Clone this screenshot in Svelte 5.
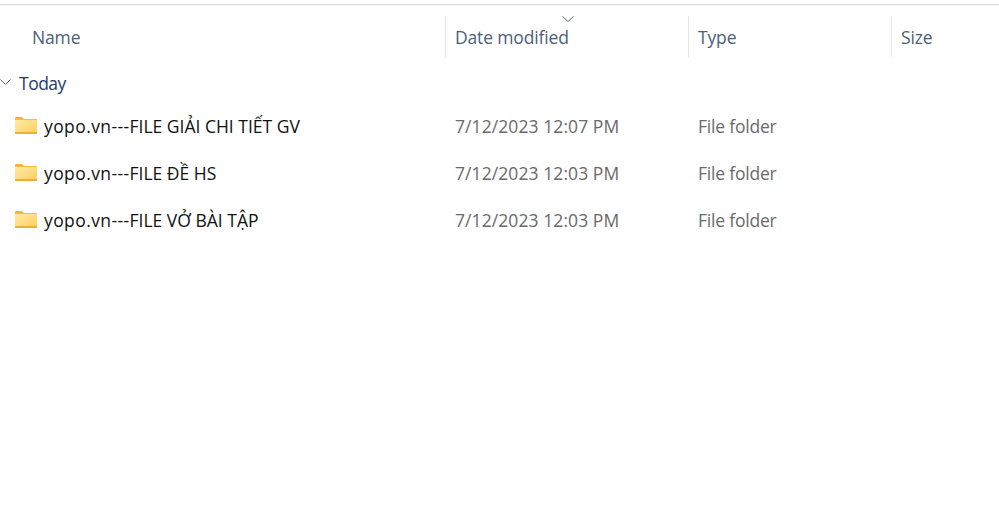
<script>
  const rows = [
    { name: 'FILE GIẢI CHI TIẾT GV', date: '7/12/2023 12:07 PM' },
    { name: 'FILE ĐỀ HS', date: '7/12/2023 12:03 PM' },
    { name: 'FILE VỞ BÀI TẬP', date: '7/12/2023 12:03 PM' }
  ];
</script>

<main class="explorer">
  <header class="head">
    <div class="col first">Name</div>
    <div class="col sep sorted">
      <svg class="sort" width="12" height="6" viewBox="0 0 12 6"><path d="M.5.5 6 5.5 11.5.5" fill="none" stroke="#5c6470" stroke-width="1"/></svg>
      Date modified
    </div>
    <div class="col sep">Type</div>
    <div class="col sep">Size</div>
  </header>

  <div class="group">
    <svg width="11" height="7" viewBox="0 0 11 7"><path d="M.5.5 5.5 5.5 10.5.5" fill="none" stroke="#6b6b6b" stroke-width="1"/></svg>
    <span>Today</span>
  </div>

  {#each rows as r}
    <div class="row">
      <div class="name">
        <svg width="22" height="18" viewBox="0 0 22 18">
          <defs>
            <linearGradient id="fold" x1="0" y1="0" x2="1" y2="1">
              <stop offset="0" stop-color="#ffeaa6"/>
              <stop offset="1" stop-color="#fdcf5f"/>
            </linearGradient>
          </defs>
          <path d="M0 2.5C0 1.7.5 1 1.3 1h5.4L9 3h13v2H0z" fill="#f4b32a"/>
          <rect x="0" y="4" width="22" height="13" fill="url(#fold)"/>
          <rect x="0" y="16" width="22" height="2" fill="#eeb02f"/>
          <rect x="0" y="3" width="22" height="1" fill="#f6bd3f"/>
        </svg>
        <span><span class="prefix">yopo.vn---</span>{r.name}</span>
      </div>
      <div class="meta date">{r.date}</div>
      <div class="meta type">File folder</div>
    </div>
  {/each}
</main>

<style>
  :global(body) {
    margin: 0;
    background: #fff;
  }
  .explorer {
    height: 511px;
    overflow: hidden;
    padding-top: 4px;
    box-sizing: border-box;
    font-family: "Open Sans", "Noto Sans", sans-serif;
    font-size: 17.5px;
  }
  .head {
    display: grid;
    grid-template-columns: 445px 243px 203px 108px;
    height: 42px;
    padding-top: 11px;
    border-top: 1px solid #e3e3e3;
    box-shadow: inset 0 1px 0 #f3f3f3;
    color: #4c607a;
    letter-spacing: -0.15px;
  }
  .col {
    display: flex;
    align-items: center;
    height: 41px;
    box-sizing: border-box;
    position: relative;
  }
  .first {
    padding-left: 32px;
  }
  .sep {
    border-left: 1px solid #e5e5e5;
    padding-left: 9px;
  }
  .sort {
    position: absolute;
    left: 116px;
    top: 0;
  }
  .group {
    display: flex;
    align-items: center;
    gap: 8px;
    height: 24px;
    margin-top: 13px;
    margin-bottom: 7px;
    color: #1f3a73;
    letter-spacing: -0.5px;
  }
  .group svg {
    margin-top: -1px;
  }
  .row {
    display: grid;
    grid-template-columns: 445px 243px 1fr;
    height: 47px;
    align-items: center;
  }
  .name {
    display: flex;
    align-items: center;
    gap: 7px;
    padding-left: 15px;
    color: #111;
  }
  .prefix {
    letter-spacing: 0.4px;
  }
  .name svg {
    margin-top: -2px;
  }
  .meta {
    padding-left: 10px;
    color: #6a6a6a;
  }
  .date {
    letter-spacing: 0.08px;
  }
  .type {
    letter-spacing: -0.2px;
  }
</style>
